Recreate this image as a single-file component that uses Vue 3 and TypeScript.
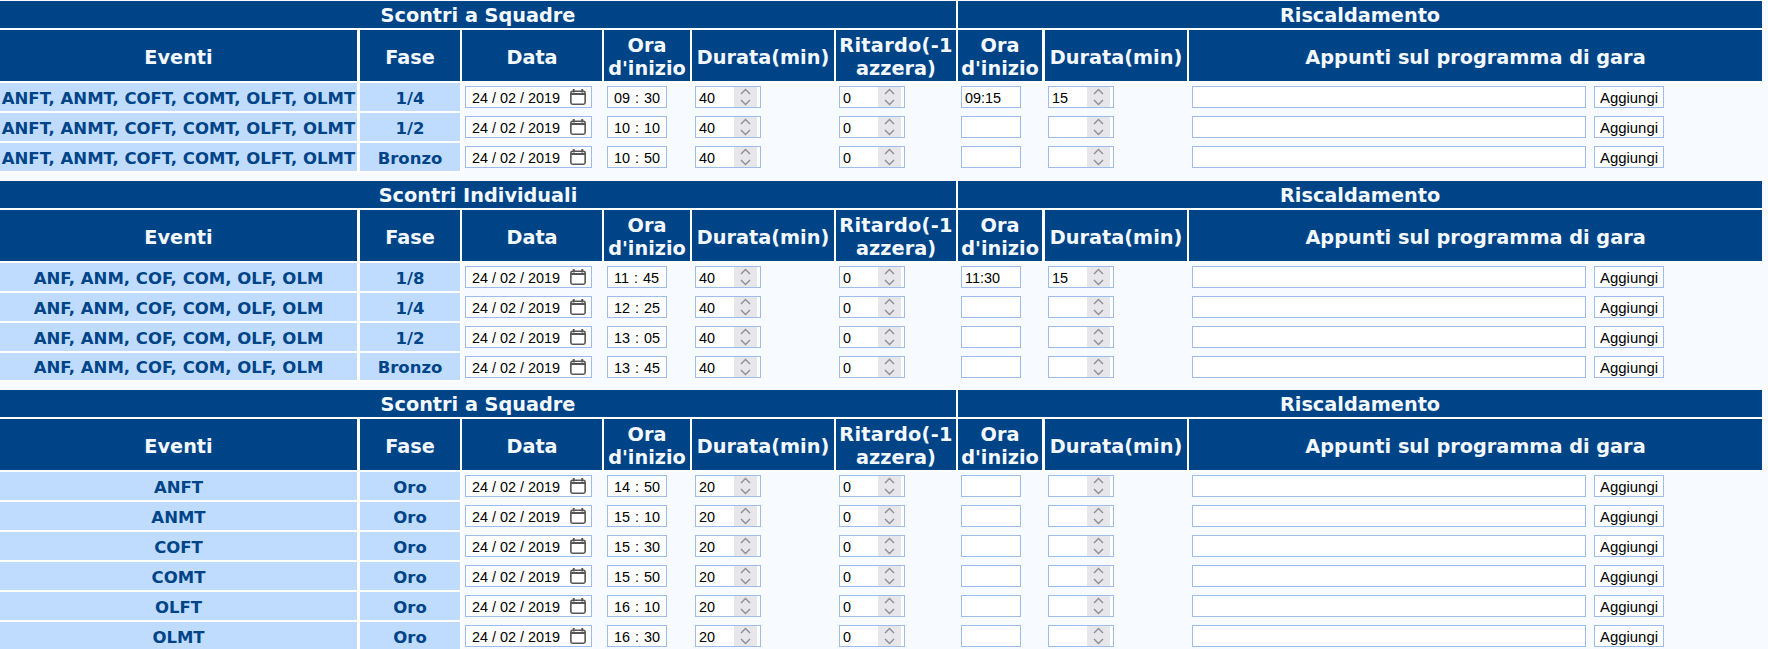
<script setup lang="ts">
interface Row { ev: string; fase: string; ora: string; dur: string; rora?: string; rdur?: string }
interface Section { title: string; rows: Row[] }
const T = 'ANFT, ANMT, COFT, COMT, OLFT, OLMT'
const I = 'ANF, ANM, COF, COM, OLF, OLM'
const sections: Section[] = [
  { title: 'Scontri a Squadre', rows: [
    { ev: T, fase: '1/4', ora: '09 : 30', dur: '40', rora: '09:15', rdur: '15' },
    { ev: T, fase: '1/2', ora: '10 : 10', dur: '40' },
    { ev: T, fase: 'Bronzo', ora: '10 : 50', dur: '40' },
  ] },
  { title: 'Scontri Individuali', rows: [
    { ev: I, fase: '1/8', ora: '11 : 45', dur: '40', rora: '11:30', rdur: '15' },
    { ev: I, fase: '1/4', ora: '12 : 25', dur: '40' },
    { ev: I, fase: '1/2', ora: '13 : 05', dur: '40' },
    { ev: I, fase: 'Bronzo', ora: '13 : 45', dur: '40' },
  ] },
  { title: 'Scontri a Squadre', rows: [
    { ev: 'ANFT', fase: 'Oro', ora: '14 : 50', dur: '20' },
    { ev: 'ANMT', fase: 'Oro', ora: '15 : 10', dur: '20' },
    { ev: 'COFT', fase: 'Oro', ora: '15 : 30', dur: '20' },
    { ev: 'COMT', fase: 'Oro', ora: '15 : 50', dur: '20' },
    { ev: 'OLFT', fase: 'Oro', ora: '16 : 10', dur: '20' },
    { ev: 'OLMT', fase: 'Oro', ora: '16 : 30', dur: '20' },
  ] },
]
</script>

<template>
  <div class="page">
    <table v-for="(s, i) in sections" :key="i" class="grid">
      <colgroup>
        <col class="c1" /><col class="c2" /><col class="c3" /><col class="c4" /><col class="c5" />
        <col class="c6" /><col class="c7" /><col class="c8" /><col class="c9" />
      </colgroup>
      <thead>
        <tr class="title">
          <th colspan="6">{{ s.title }}</th>
          <th colspan="3">Riscaldamento</th>
        </tr>
        <tr class="head">
          <th>Eventi</th><th>Fase</th><th>Data</th><th>Ora d'inizio</th><th>Durata(min)</th>
          <th><span class="wide">Ritardo(-1</span> azzera)</th><th>Ora d'inizio</th><th>Durata(min)</th><th>Appunti sul programma di gara</th>
        </tr>
      </thead>
      <tbody>
        <tr v-for="(r, j) in s.rows" :key="j">
          <td class="lab">{{ r.ev }}</td>
          <td class="lab">{{ r.fase }}</td>
          <td>
            <span class="box date">
              <span>24 / 02 / 2019</span>
              <svg width="16" height="16" viewBox="0 0 15 16" preserveAspectRatio="none" class="cal">
                <path d="M3.5 0v3.5M11.5 0v3.5" stroke="#555" stroke-width="1.8" fill="none" />
                <rect x="0.8" y="2.3" width="13.4" height="12.9" rx="1.6" fill="none" stroke="#555" stroke-width="1.5" />
                <path d="M1 5h13" stroke="#555" stroke-width="2" />
              </svg>
            </span>
          </td>
          <td><span class="box time">{{ r.ora }}</span></td>
          <td><span class="box num n1"><span class="v">{{ r.dur }}</span><span class="spin"><svg width="23" height="20" viewBox="0 0 23 20"><path d="M7 7 11.5 2.5 16 7M7 13l4.500 4.500L16 13" fill="none" stroke="#8e8e93" stroke-width="1.4" /></svg></span></span></td>
          <td><span class="box num n2"><span class="v">0</span><span class="spin"><svg width="23" height="20" viewBox="0 0 23 20"><path d="M7 7 11.5 2.5 16 7M7 13l4.500 4.500L16 13" fill="none" stroke="#8e8e93" stroke-width="1.4" /></svg></span></span></td>
          <td><span class="box rtime">{{ r.rora }}</span></td>
          <td><span class="box num n1"><span class="v">{{ r.rdur }}</span><span class="spin"><svg width="23" height="20" viewBox="0 0 23 20"><path d="M7 7 11.5 2.5 16 7M7 13l4.500 4.500L16 13" fill="none" stroke="#8e8e93" stroke-width="1.4" /></svg></span></span></td>
          <td class="notes"><span class="box note"></span><span class="box btn">Aggiungi</span></td>
        </tr>
      </tbody>
    </table>
  </div>
</template>

<style>
html, body { margin: 0; background: #f7fbff; }
</style>

<style scoped>
.page { width: 1768px; height: 649px; overflow: hidden; background: #f7fbff; padding-top: 1px; box-sizing: border-box; }
.grid { width: 1762px; table-layout: fixed; border-collapse: separate; border-spacing: 0; margin-bottom: 8px; font-family: "DejaVu Sans", sans-serif; }
.grid:nth-of-type(2) tbody tr:last-child td { height: 27px; }
.c1 { width: 360px; } .c2 { width: 102px; } .c3 { width: 142px; } .c4 { width: 88px; } .c5 { width: 144px; }
.c6 { width: 122px; } .c7 { width: 87px; } .c8 { width: 144px; } .c9 { width: 573px; }
th { background: #004488; color: #f4f9ff; font-weight: 700; padding: 0; border-right: 2px solid #fff; border-bottom: 2px solid #fff; text-align: center; }
th:last-child { border-right: 0; }
.title th { height: 24px; padding-top: 3px; font-size: 19.3px; line-height: 24px; }
.head th { height: 48px; padding-top: 3px; font-size: 19.3px; line-height: 23px; }
.head th:first-child, .head th:nth-child(7) { border-right-width: 3px; }
.wide { letter-spacing: 0.3px; white-space: nowrap; }
td { padding: 0 0 2px 0; height: 28px; text-align: left; vertical-align: middle; }
td.lab { background: #bfdcff; color: #004488; font-weight: 700; font-size: 16.5px; text-align: center; border-right: 3px solid #fff; border-bottom: 2px solid #fff; padding: 2px 0 0; height: 26px; white-space: nowrap; }
.grid:nth-of-type(2) tbody tr:last-child td.lab { height: 25px; }
td.lab:nth-child(2) { border-right-width: 2px; }
td:nth-child(n+3) { padding-left: 3px; }
.box { box-sizing: border-box; display: inline-flex; align-items: center; height: 22px; padding-top: 2px; background: #fff; border: 1px solid #9dbde8; font: 14.4px "Liberation Sans", Arial, sans-serif; color: #000; vertical-align: middle; }
.date { width: 127px; padding-left: 6px; justify-content: space-between; padding-right: 5px; }
.cal { display: block; margin-top: -2px; }
.time { width: 60px; padding-left: 6px; word-spacing: 1px; }
.rtime { width: 60px; padding-left: 3px; }
.num { padding-left: 3px; justify-content: space-between; padding-right: 3px; }
.n1 { width: 66px; } .n2 { width: 66px; }
.spin { width: 23px; height: 20px; margin-top: -2px; background: #e6e6eb; display: block; }
.spin svg { display: block; }
.note { width: 394px; }
.btn { width: 70px; margin-left: 8px; justify-content: center; font-size: 14.9px; }
.notes { white-space: nowrap; }
</style>
